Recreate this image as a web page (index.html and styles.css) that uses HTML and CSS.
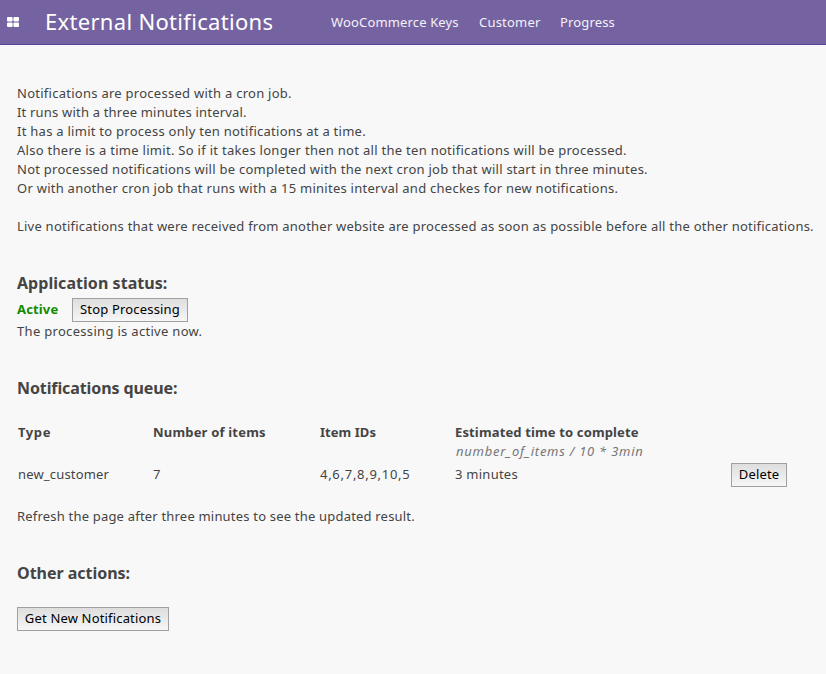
FILE: index.html
```
<!DOCTYPE html>
<html lang="en">
<head>
<meta charset="utf-8">
<title>External Notifications</title>
<link rel="stylesheet" href="styles.css">
</head>
<body>
<header class="topbar">
  <svg class="apps" width="12" height="10" viewBox="0 0 12 10" fill="#fff"><rect width="5.6" height="4.6" rx="1"/><rect x="6.4" width="5.6" height="4.6" rx="1"/><rect y="5.4" width="5.6" height="4.6" rx="1"/><rect x="6.4" y="5.4" width="5.6" height="4.6" rx="1"/></svg>
  <h1>External Notifications</h1>
  <nav class="menu"><a class="menu-keys">WooCommerce Keys</a><a class="menu-customer">Customer</a><a class="menu-progress">Progress</a></nav>
</header>
<main>
  <section class="intro">
    <p class="line-job">Notifications are processed with a cron job.</p>
    <p class="line-interval">It runs with a three minutes interval.</p>
    <p class="line-limit">It has a limit to process only ten notifications at a time.</p>
    <p class="line-time">Also there is a time limit. So if it takes longer then not all the ten notifications will be processed.</p>
    <p>Not processed notifications will be completed with the next cron job that will start in three minutes.</p>
    <p>Or with another cron job that runs with a 15 minites interval and checkes for new notifications.</p>
    <p class="live">Live notifications that were received from another website are processed as soon as possible before all the other notifications.</p>
  </section>
  <section class="status">
    <h2 class="status-title">Application status:</h2>
    <div class="state"><strong>Active</strong><button class="stop">Stop Processing</button></div>
    <p class="status-note">The processing is active now.</p>
  </section>
  <section class="queue">
    <h2>Notifications queue:</h2>
    <div class="grid">
      <b class="col-type">Type</b>
      <b class="col-number">Number of items</b>
      <b class="col-ids">Item IDs</b>
      <div class="estimate"><b>Estimated time to complete</b><i>number_of_items / 10 * 3min</i></div>
      <span></span>
      <span class="type">new_customer</span>
      <span>7</span>
      <span class="ids">4,6,7,8,9,10,5</span>
      <span>3 minutes</span>
      <button class="delete">Delete</button>
    </div>
    <p class="refresh">Refresh the page after three minutes to see the updated result.</p>
  </section>
  <section class="actions">
    <h2 class="actions-title">Other actions:</h2>
    <button class="get-new">Get New Notifications</button>
  </section>
</main>
</body>
</html>
```
FILE: styles.css
```
* { box-sizing: border-box; }
body {
  margin: 0;
  font: 13px/19px "Noto Sans", sans-serif;
  letter-spacing: .255px;
  background: #f8f8f8;
  color: #444;
}
h1, h2, p { margin: 0; white-space: nowrap; }
.topbar {
  display: flex;
  align-items: center;
  height: 45px;
  padding: 0 0 1px 7px;
  background: #7463a0;
  border-bottom: 1px solid #58429b;
  color: #fff;
}
.apps { flex: none; }
h1 {
  width: 286px;
  margin-left: 26px;
  padding-bottom: 2px;
  font-size: 22px;
  line-height: 30px;
  font-weight: 400;
  letter-spacing: .31px;
}
.menu { display: flex; padding-top: 2px; color: #f4f1f9; white-space: nowrap; }
.menu-keys { width: 148px; letter-spacing: .15px; }
.menu-customer { width: 81px; letter-spacing: .2px; }
.menu-progress { letter-spacing: .15px; }

main { padding: 39px 0 0 17px; }
h2 { font-size: 16px; line-height: 19px; letter-spacing: -.1px; }
.line-job, .line-limit { letter-spacing: .265px; }
.line-interval { letter-spacing: .19px; }
.line-time { letter-spacing: .287px; }
.live { margin-top: 19px; letter-spacing: .228px; }

button {
  height: 24px;
  padding: 0 0 1px;
  border: 1px solid #a0a0a0;
  background: linear-gradient(#dedede, #f6f6f6);
  color: #000;
  font: inherit;
  letter-spacing: .17px;
  text-align: center;
  white-space: nowrap;
}
.status { margin-top: 38px; }
.status-title { letter-spacing: .05px; }
.state { display: flex; align-items: center; margin-top: 5px; }
.state strong { width: 55px; padding-bottom: 2px; color: #138a00; letter-spacing: .15px; }
.stop { width: 116px; }
.status-note { letter-spacing: .31px; }

.queue { margin-top: 38px; }
.grid {
  display: grid;
  grid-template-columns: 135px 167px 135px 276px 56px;
  grid-template-rows: 38px 24px;
  row-gap: 2px;
  margin: 25px 0 20px 1px;
}
.grid > span { line-height: 23px; }
.col-type { letter-spacing: .6px; }
.col-number { letter-spacing: .19px; }
.col-ids { letter-spacing: .05px; }
.estimate b, .estimate i { display: block; }
.estimate b { letter-spacing: .14px; }
.estimate i { padding-left: 1px; letter-spacing: .74px; color: #777; }
.type { letter-spacing: .17px; }
.ids { letter-spacing: .72px; }
.delete { width: 56px; }
.refresh { letter-spacing: .195px; }

.actions { margin-top: 38px; }
.actions-title { margin-bottom: 24px; letter-spacing: -.02px; }
.get-new { display: block; width: 152px; }
```
